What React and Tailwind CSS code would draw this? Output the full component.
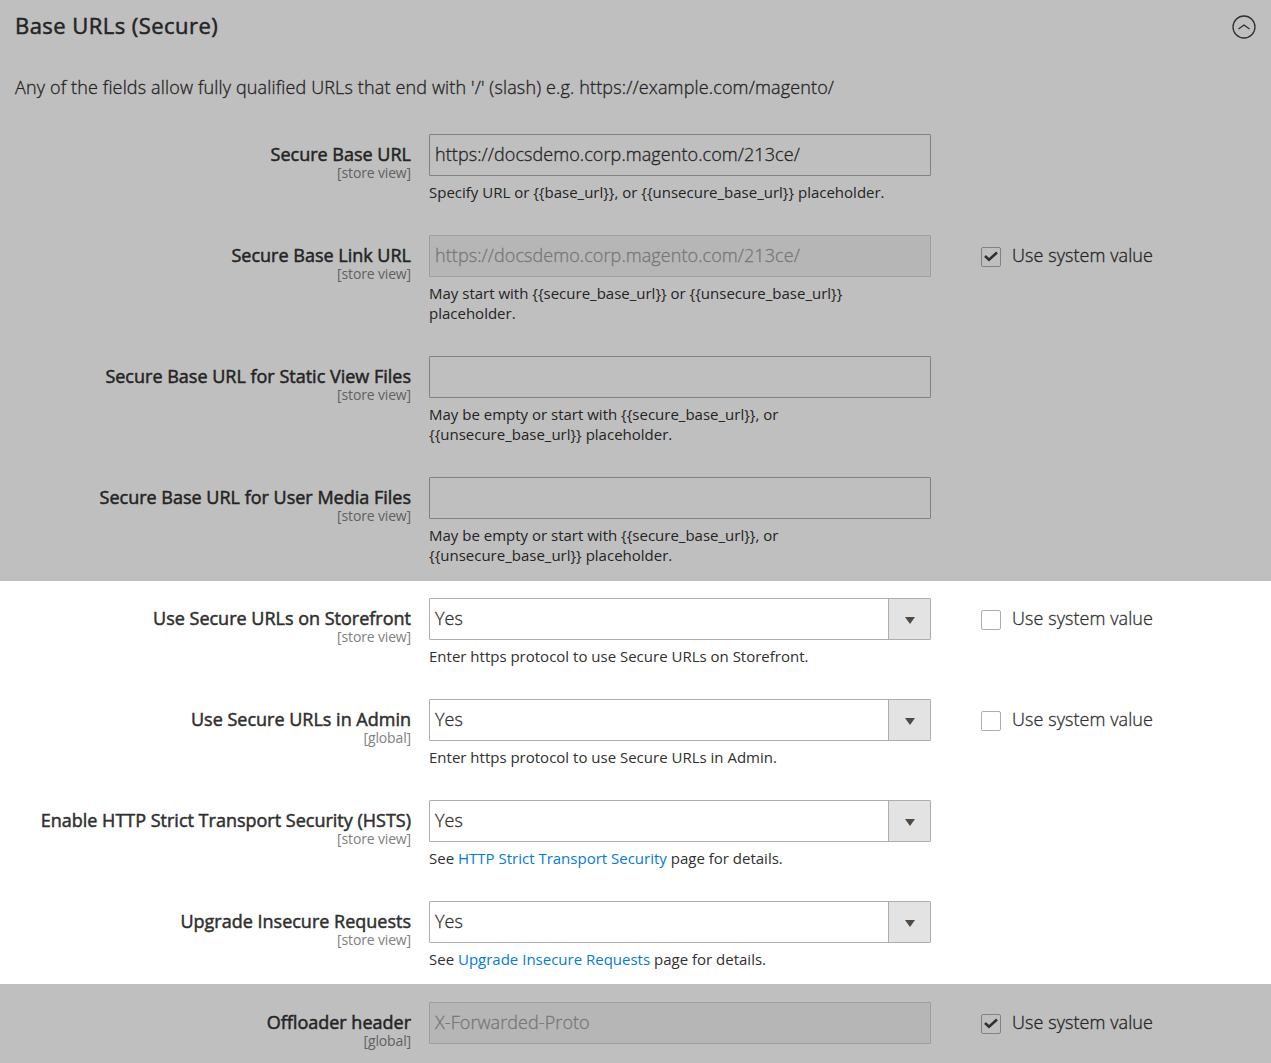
const Check = ({ on, dim }) => (
  <div className="flex pl-[50px] pt-[9px]">
    <span className={`mt-[3px] mr-[11px] flex h-5 w-5 items-center justify-center rounded-[2px] border ${dim ? "border-[#828282] bg-[#bfbfbf]" : "border-[#adadad] bg-white"}`}>
      {on && (
        <svg width="14" height="11" viewBox="0 0 14 11" className="-mt-[2px]" fill="none" stroke="#303030" strokeWidth="2.6">
          <path d="M1 5 5 8.7 13 1.5" />
        </svg>
      )}
    </span>
    <span className="text-[18px] font-light leading-[22px] tracking-[0.07px] [-webkit-text-stroke:0.3px]">Use system value</span>
  </div>
);

const Field = ({ label, scope, value = "", select, disabled, dim, note, check, height }) => (
  <div className={`flex ${height}`}>
    <div className="w-[411px] shrink-0 pt-[8px] text-right">
      <div className="text-[18px] leading-[24px] [-webkit-text-stroke:0.5px]">{label}</div>
      <div className={`text-[14px] leading-[14px] tracking-[-0.15px] ${dim ? "text-[#616161]" : "text-[#808080]"}`}>[{scope}]</div>
    </div>
    <div className="ml-[18px] w-[502px] shrink-0">
      <div className={`flex h-[42px] items-stretch rounded-[1px] border text-[18px] font-light leading-[39px] tracking-[0.08px] [-webkit-text-stroke:0.3px] ${disabled ? "border-[#9e9e9e] bg-[#b6b6b6] text-[#777777]" : dim ? "border-[#828282]" : "border-[#adadad] bg-white"}`}>
        <span className="flex-1 pl-[5px]">{value}</span>
        {select && (
          <span className="flex w-[42px] items-center justify-center border-l border-[#adadad] bg-[#e3e3e3]">
            <svg width="10" height="7" viewBox="0 0 10 7" className="mt-[3px]"><path d="M0 0h10L5 7z" fill="#514943" /></svg>
          </span>
        )}
      </div>
      {note && <div className="mt-[6px] text-[15px] leading-[20px]">{note}</div>}
    </div>
    {check && <Check on={check === "on"} dim={dim} />}
  </div>
);

const Link = ({ children }) => <a className="text-[#007bdb]">{children}</a>;

export default function App() {
  return (
    <main className="h-[1063px] w-[1271px] overflow-hidden bg-[#bfbfbf] text-[#303030]" style={{ fontFamily: '"Open Sans", sans-serif' }}>
      <section className="h-[581px] text-[#242424]">
        <header className="flex h-[54px] items-center justify-between pl-[15px] pr-[15px]">
          <h2 className="-mt-[4px] text-[22px] tracking-[0.45px] [-webkit-text-stroke:0.5px]">Base URLs (Secure)</h2>
          <svg width="24" height="24" viewBox="0 0 24 24" fill="none" stroke="#303030" strokeWidth="1.3">
            <circle cx="12" cy="12" r="11" />
            <path d="m6.5 14 5.5-4 5.5 4" />
          </svg>
        </header>
        <p className="h-[80px] pl-[15px] pt-[21px] text-[18px] font-light leading-[24px] tracking-[0.148px] [-webkit-text-stroke:0.3px]">Any of the fields allow fully qualified URLs that end with '/' (slash) e.g. https://example.com/magento/</p>
        <Field dim height="h-[101px]" label="Secure Base URL" scope="store view" value="https://docsdemo.corp.magento.com/213ce/" note="Specify URL or {{base_url}}, or {{unsecure_base_url}} placeholder." />
        <Field dim disabled check="on" height="h-[121px]" label="Secure Base Link URL" scope="store view" value="https://docsdemo.corp.magento.com/213ce/" note={<>May start with {"{{secure_base_url}} or {{unsecure_base_url}}"}<br />placeholder.</>} />
        <Field dim height="h-[121px]" label="Secure Base URL for Static View Files" scope="store view" note={<>May be empty or start with {"{{secure_base_url}}, or"}<br />{"{{unsecure_base_url}} placeholder."}</>} />
        <Field dim height="h-[104px]" label="Secure Base URL for User Media Files" scope="store view" note={<>May be empty or start with {"{{secure_base_url}}, or"}<br />{"{{unsecure_base_url}} placeholder."}</>} />
      </section>
      <section className="h-[403px] bg-white pt-[17px]">
        <Field select check="off" height="h-[101px]" label="Use Secure URLs on Storefront" scope="store view" value="Yes" note="Enter https protocol to use Secure URLs on Storefront." />
        <Field select check="off" height="h-[101px]" label="Use Secure URLs in Admin" scope="global" value="Yes" note="Enter https protocol to use Secure URLs in Admin." />
        <Field select height="h-[101px]" label="Enable HTTP Strict Transport Security (HSTS)" scope="store view" value="Yes" note={<>See <Link>HTTP Strict Transport Security</Link> page for details.</>} />
        <Field select height="h-[83px]" label="Upgrade Insecure Requests" scope="store view" value="Yes" note={<>See <Link>Upgrade Insecure Requests</Link> page for details.</>} />
      </section>
      <section className="h-[79px] pt-[18px] text-[#242424]">
        <Field dim disabled check="on" height="h-[61px]" label="Offloader header" scope="global" value="X-Forwarded-Proto" />
      </section>
    </main>
  );
}
